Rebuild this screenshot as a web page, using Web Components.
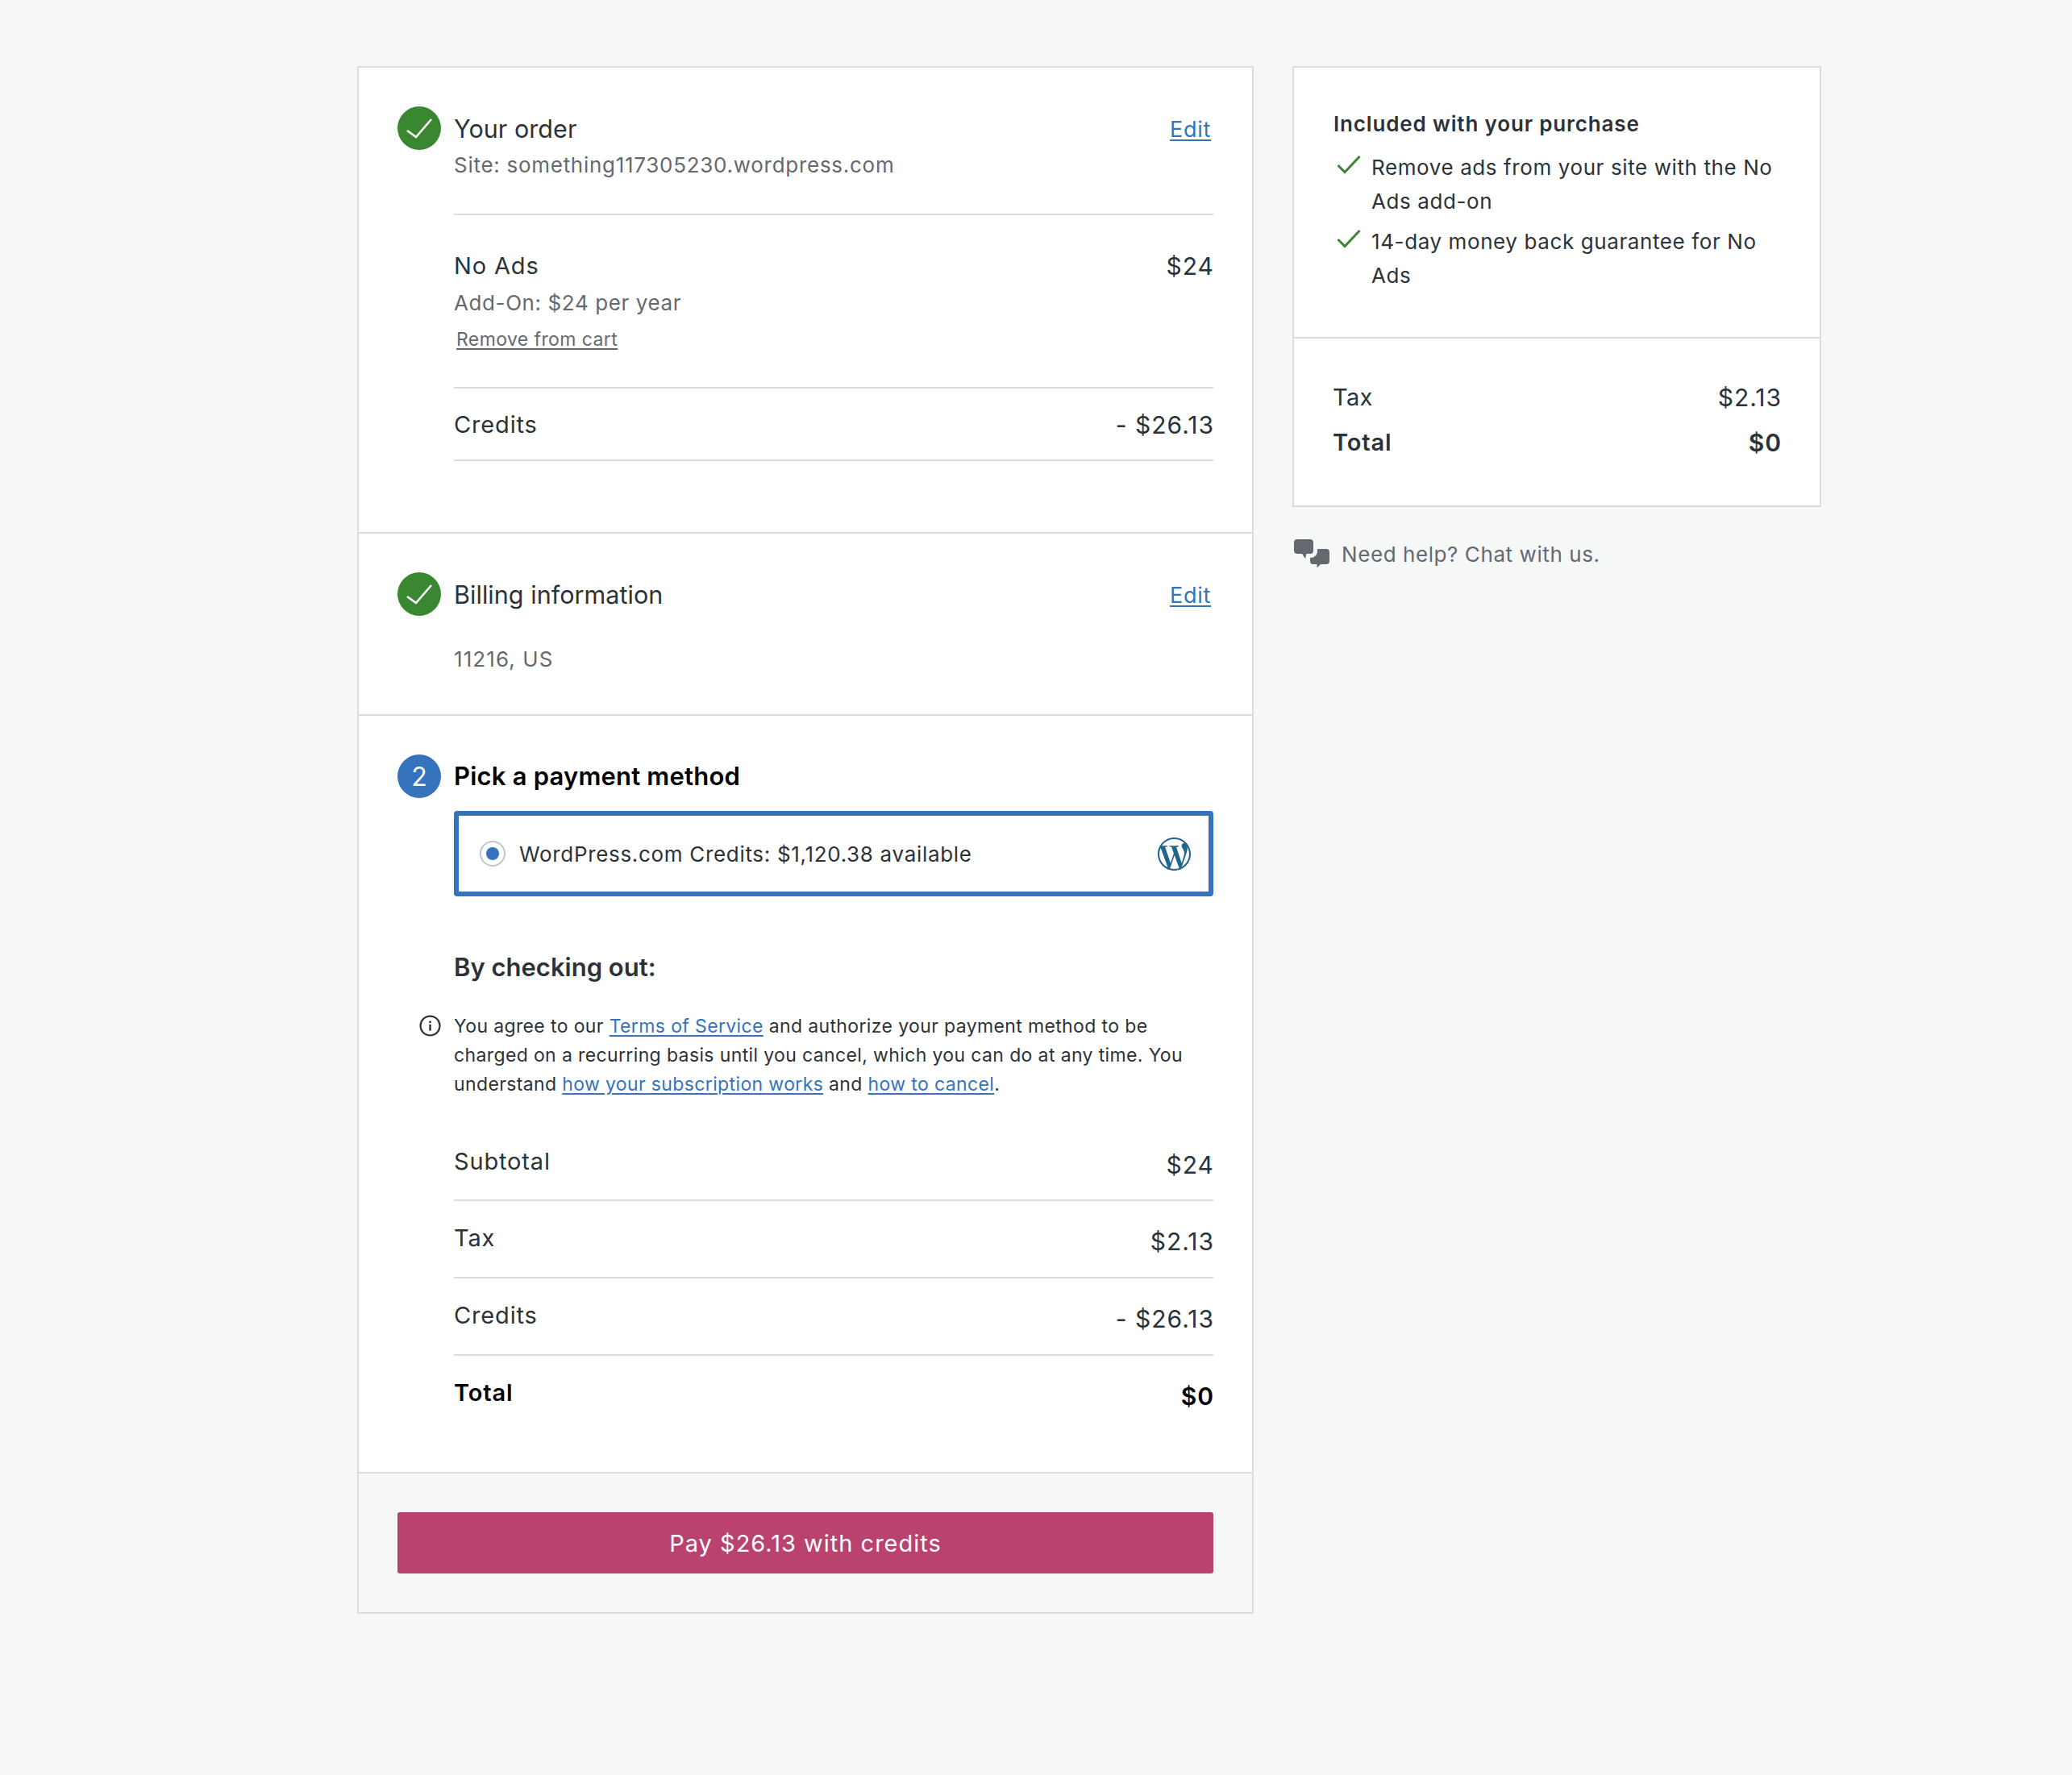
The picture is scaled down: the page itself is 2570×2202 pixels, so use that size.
<!DOCTYPE html>
<html>
<head>
<meta charset="utf-8">
<title>Checkout</title>
<style>
    html, body { margin: 0; background: #f6f7f7; }
    body { font-family: Inter, "Noto Sans", sans-serif; color: #2c3338; }
    .sub { font-size: 26px; line-height: 36px; color: #646970; letter-spacing: .6px; }
    .rule { border-bottom: 2px solid #dcdcde; }
    .remove { font-size: 23px; line-height: 30px; color: #646970; letter-spacing: .4px; margin: 12px 0 0 3px; }
    .remove span { text-decoration: underline; text-underline-offset: 3px; }
    .terms { font-size: 31px; line-height: 40px; font-weight: 600; margin-top: 68px; }
</style>
</head>
<body>
<checkout-page>
    <checkout-card slot="main" width="1112">
        <checkout-step status="done" title="Your order" edit pad-bottom="88">
            <div class="sub" style="margin-top:1px;letter-spacing:.72px;">Site: something117305230.wordpress.com</div>
            <div class="rule" style="margin-top:42px;"></div>
            <line-row label="No Ads" value="$24" style="margin-top:43px;"></line-row>
            <div class="sub" style="margin-top:8px;">Add-On: $24 per year</div>
            <div class="remove"><span>Remove from cart</span></div>
            <div class="rule" style="margin-top:44px;"></div>
            <line-row label="Credits" value="- $26.13" style="margin-top:25px;"></line-row>
            <div class="rule" style="margin-top:23px;"></div>
        </checkout-step>
        <checkout-step status="done" title="Billing information" edit pad-bottom="50" bordered>
            <div class="sub" style="margin-top:36px;letter-spacing:1.1px;">11216, US</div>
        </checkout-step>
        <checkout-step status="2" title="Pick a payment method" pad-bottom="50" bordered>
            <payment-option style="margin-top:16px;">WordPress.com Credits: $1,120.38 available</payment-option>
            <div class="terms">By checking out:</div>
            <legal-note style="margin-top:35px;">You agree to our <a>Terms of Service</a> and authorize your payment method to be charged on a recurring basis until you cancel, which you can do at any time. You understand <a>how your subscription works</a> and <a>how to cancel</a>.</legal-note>
            <summary-row label="Subtotal" value="$24" style="margin-top:29px;padding-top:27px;"></summary-row>
            <summary-row label="Tax" value="$2.13" divided></summary-row>
            <summary-row label="Credits" value="- $26.13" divided></summary-row>
            <summary-row label="Total" value="$0" divided strong></summary-row>
        </checkout-step>
        <pay-footer>Pay $26.13 with credits</pay-footer>
    </checkout-card>
    <div slot="side">
        <checkout-card width="656">
            <included-list>
                <span slot="title">Included with your purchase</span>
                <check-item>Remove ads from your site with the No Ads add-on</check-item>
                <check-item>14-day money back guarantee for No Ads</check-item>
            </included-list>
            <side-totals></side-totals>
        </checkout-card>
        <help-link>Need help? Chat with us.</help-link>
    </div>
</checkout-page>

<script>
class CheckoutPage extends HTMLElement {
    constructor() {
        super();
        this.attachShadow({ mode: 'open' });
        this.shadowRoot.innerHTML = `
            <style>
                :host { display: flex; gap: 48px; padding: 82px 0 198px 443px; align-items: flex-start; }
            </style>
            <slot name="main"></slot>
            <slot name="side"></slot>
        `;
    }
}

class CheckoutCard extends HTMLElement {
    constructor() {
        super();
        this.attachShadow({ mode: 'open' });
        this.shadowRoot.innerHTML = `
            <style>
                :host { display: block; box-sizing: border-box; background: #fff; border: 2px solid #dcdcde; }
            </style>
            <slot></slot>
        `;
    }

    connectedCallback() {
        this.style.width = this.getAttribute('width') + 'px';
    }
}

class CheckoutStep extends HTMLElement {
    constructor() {
        super();
        this.attachShadow({ mode: 'open' });
    }

    connectedCallback() {
        const status = this.getAttribute('status');
        const done = status === 'done';
        const badge = done
            ? `<svg width="34" height="26" viewBox="0 0 34 26"><path d="M2 16l11 8L32 2" fill="none" stroke="#fff" stroke-width="2.600"/></svg>`
            : status;
        this.shadowRoot.innerHTML = `
            <style>
                :host { display: block; padding: 48px 48px ${this.getAttribute('pad-bottom')}px; }
                :host([bordered]) { border-top: 2px solid #dcdcde; }
                .head { display: flex; align-items: center; height: 54px; }
                .badge { width: 54px; height: 54px; border-radius: 50%; display: flex; align-items: center; justify-content: center;
                    color: #fff; font-size: 32px; margin-right: 17px; flex: none; background: ${done ? '#3a8731' : '#3573bc'}; }
                .title { flex: 1; margin-left: -1px; padding-top: ${done ? 2 : 0}px; font-size: ${done ? '30.5px' : '31px'}; line-height: 40px; color: ${done ? '#2c3338' : '#000'};
                    font-weight: ${done ? 400 : 600}; letter-spacing: ${done ? '.05px' : '.2px'}; }
                .edit { font-size: 27px; letter-spacing: .7px; color: #3573bc; text-decoration: underline; text-underline-offset: 3px; margin-right: 3px; padding-top: 3px; }
                .body { margin-left: 70px; }
            </style>
            <div class="head">
                <div class="badge">${badge}</div>
                <div class="title">${this.getAttribute('title')}</div>
                ${this.hasAttribute('edit') ? '<a class="edit">Edit</a>' : ''}
            </div>
            <div class="body"><slot></slot></div>
        `;
    }
}

class LineRow extends HTMLElement {
    constructor() {
        super();
        this.attachShadow({ mode: 'open' });
    }

    connectedCallback() {
        this.shadowRoot.innerHTML = `
            <style>
                :host { display: flex; justify-content: space-between; font-size: 29px; line-height: 40px; color: #2c3338; letter-spacing: .85px; }
                .value { font-size: 30px; letter-spacing: 1px; margin-right: -1px; }
            </style>
            <span>${this.getAttribute('label')}</span>
            <span class="value">${this.getAttribute('value')}</span>
        `;
    }
}

class SummaryRow extends HTMLElement {
    constructor() {
        super();
        this.attachShadow({ mode: 'open' });
    }

    connectedCallback() {
        this.shadowRoot.innerHTML = `
            <style>
                :host { display: flex; justify-content: space-between; align-items: flex-start; box-sizing: border-box; height: 96px; padding-top: 26px;
                    border-top: 2px solid transparent; font-size: 29px; line-height: 40px; color: #2c3338; letter-spacing: .85px; }
                :host([divided]) { border-top-color: #dcdcde; }
                :host([strong]) { font-weight: 600; color: #000; }
                .value { font-size: 30px; margin: 4px -1px 0 0; letter-spacing: 1px; }
            </style>
            <span>${this.getAttribute('label')}</span>
            <span class="value">${this.getAttribute('value')}</span>
        `;
    }
}

class PaymentOption extends HTMLElement {
    constructor() {
        super();
        this.attachShadow({ mode: 'open' });
        this.shadowRoot.innerHTML = `
            <style>
                :host { display: flex; align-items: center; box-sizing: border-box; height: 106px; padding: 0 22px 0 26px;
                    border: 6px solid #3573bc; border-radius: 4px; font-size: 26px; letter-spacing: .68px; color: #2c3338; }
                .radio { box-sizing: border-box; width: 32px; height: 32px; border: 2px solid #c3c4c7; border-radius: 50%; margin-right: 17px;
                    display: flex; align-items: center; justify-content: center; }
                .radio i { width: 16px; height: 16px; border-radius: 50%; background: #3573bc; }
                .text { flex: 1; }
                svg { display: block; }
            </style>
            <span class="radio"><i></i></span>
            <span class="text"><slot></slot></span>
            <svg width="41" height="41" viewBox="0 0 24 24"><path fill="#21668c" d="M21.469 6.825c.84 1.537 1.318 3.3 1.318 5.175 0 3.979-2.156 7.456-5.363 9.325l3.295-9.527c.615-1.54.82-2.771.82-3.864 0-.405-.026-.78-.07-1.11m-7.981.105c.647-.03 1.232-.105 1.232-.105.582-.075.514-.93-.067-.899 0 0-1.755.135-2.88.135-1.064 0-2.85-.15-2.85-.15-.585-.03-.661.855-.075.885 0 0 .54.061 1.125.09l1.68 4.605-2.37 7.08L5.354 6.9c.649-.03 1.234-.1 1.234-.1.585-.075.516-.93-.065-.896 0 0-1.746.138-2.874.138-.2 0-.438-.008-.69-.015C4.911 3.15 8.235 1.215 12 1.215c2.809 0 5.365 1.072 7.286 2.833-.046-.003-.091-.009-.141-.009-1.06 0-1.812.923-1.812 1.914 0 .89.513 1.643 1.06 2.531.411.72.89 1.643.89 2.977 0 .915-.354 1.994-.821 3.479l-1.075 3.585-3.9-11.61.001.014zM12 22.784c-1.059 0-2.081-.153-3.048-.437l3.237-9.406 3.315 9.087c.024.053.05.101.078.149-1.12.393-2.325.609-3.582.609M1.211 12c0-1.564.336-3.05.935-4.39L7.29 21.709C3.694 19.96 1.212 16.271 1.21 12M12 0C5.385 0 0 5.385 0 12s5.385 12 12 12 12-5.385 12-12S18.615 0 12 0"/></svg>
        `;
    }
}

class LegalNote extends HTMLElement {
    constructor() {
        super();
        this.attachShadow({ mode: 'open' });
        this.shadowRoot.innerHTML = `
            <style>
                :host { display: block; position: relative; font-size: 23px; line-height: 36px; letter-spacing: .37px; color: #2c3338; }
                svg { position: absolute; left: -43px; top: 4px; }
                a { color: #3573bc; text-decoration: underline; text-underline-offset: 3px; }
            </style>
            <svg width="27" height="27" viewBox="0 0 24 24"><circle cx="12" cy="12" r="10.6" fill="none" stroke="#2c3338" stroke-width="2"/><rect x="10.9" y="10.5" width="2.2" height="7" fill="#2c3338"/><rect x="10.9" y="6.8" width="2.2" height="2.2" fill="#2c3338"/></svg>
            <span id="text"></span>
        `;
    }

    connectedCallback() {
        // moved into the shadow so the link colour can be styled here
        this.shadowRoot.querySelector('#text').innerHTML = this.innerHTML;
        this.innerHTML = '';
    }
}

class PayFooter extends HTMLElement {
    constructor() {
        super();
        this.attachShadow({ mode: 'open' });
        this.shadowRoot.innerHTML = `
            <style>
                :host { display: block; padding: 48px; background: #f6f7f7; border-top: 2px solid #dcdcde; }
                button { display: block; width: 100%; height: 76px; border: 0; border-radius: 3px; background: #b9426f; color: #fff;
                    font: 400 29px Inter, sans-serif; letter-spacing: 1px; padding: 0; }
            </style>
            <button><slot></slot></button>
        `;
    }
}

class IncludedList extends HTMLElement {
    constructor() {
        super();
        this.attachShadow({ mode: 'open' });
        this.shadowRoot.innerHTML = `
            <style>
                :host { display: block; padding: 52px 48px 47px 49px; font-size: 26px; letter-spacing: .6px; color: #2c3338; }
                .title { font-weight: 600; line-height: 36px; margin-bottom: 15px; letter-spacing: .85px; }
            </style>
            <div class="title"><slot name="title"></slot></div>
            <slot></slot>
        `;
    }
}

class CheckItem extends HTMLElement {
    constructor() {
        super();
        this.attachShadow({ mode: 'open' });
        this.shadowRoot.innerHTML = `
            <style>
                :host { display: flex; line-height: 42px; margin-bottom: 8px; }
                svg { flex: none; margin: 5px 13px 0 4px; }
            </style>
            <svg width="30" height="24" viewBox="0 0 30 24"><path d="M1.500 13l8.500 8.500L28.500 2" fill="none" stroke="#3a8731" stroke-width="3"/></svg>
            <span><slot></slot></span>
        `;
    }
}

class SideTotals extends HTMLElement {
    constructor() {
        super();
        this.attachShadow({ mode: 'open' });
        this.shadowRoot.innerHTML = `
            <style>
                :host { display: block; padding: 53px 48px 58px; border-top: 2px solid #dcdcde; font-size: 29px; line-height: 40px; color: #2c3338; letter-spacing: .3px; }
                div { display: flex; justify-content: space-between; }
                .value { font-size: 30px; letter-spacing: 1px; margin-right: -1px; }
                .total { font-weight: 600; margin-top: 16px; letter-spacing: .85px; }
            </style>
            <div><span>Tax</span><span class="value">$2.13</span></div>
            <div class="total"><span>Total</span><span class="value">$0</span></div>
        `;
    }
}

class HelpLink extends HTMLElement {
    constructor() {
        super();
        this.attachShadow({ mode: 'open' });
        this.shadowRoot.innerHTML = `
            <style>
                :host { display: flex; align-items: center; margin-top: 41px; padding-left: 2px; font-size: 26px; line-height: 36px; letter-spacing: .58px; color: #646970; }
                svg { margin: -3px 14px 0 0; flex: none; }
            </style>
            <svg width="45" height="36" viewBox="0 0 45 36"><path fill="#646970" d="M4 0h16a4 4 0 0 1 4 4v10a4 4 0 0 1-4 4h-4.500L14 24l-4-6H4a4 4 0 0 1-4-4V4a4 4 0 0 1 4-4z"/><path fill="#646970" d="M29 12h11a4 4 0 0 1 4 4v11a4 4 0 0 1-4 4h-7l-4.500 4.500V31H24a4 4 0 0 1-4-4v-4h1c4 0 7-3 8-7z"/></svg>
            <slot></slot>
        `;
    }
}

customElements.define('checkout-page', CheckoutPage);
customElements.define('checkout-card', CheckoutCard);
customElements.define('checkout-step', CheckoutStep);
customElements.define('line-row', LineRow);
customElements.define('summary-row', SummaryRow);
customElements.define('payment-option', PaymentOption);
customElements.define('legal-note', LegalNote);
customElements.define('pay-footer', PayFooter);
customElements.define('included-list', IncludedList);
customElements.define('check-item', CheckItem);
customElements.define('side-totals', SideTotals);
customElements.define('help-link', HelpLink);
</script>
</body>
</html>
